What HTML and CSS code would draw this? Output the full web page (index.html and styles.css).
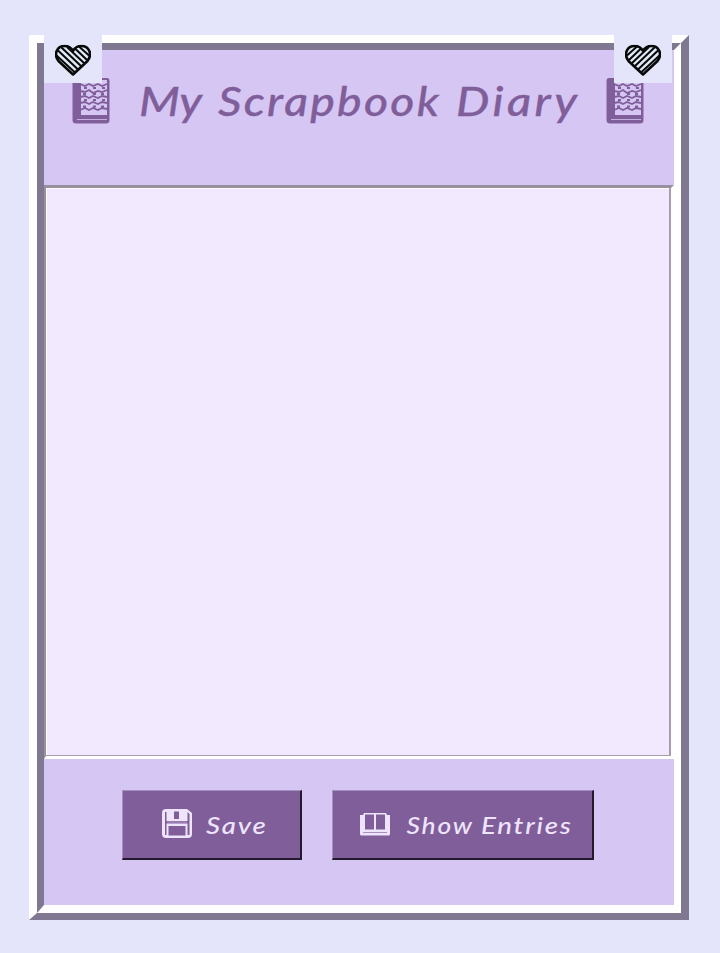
FILE: index.html
```html
<!DOCTYPE html>
<html lang="en">
<head>
<meta charset="utf-8">
<title>My Scrapbook Diary</title>
<link rel="stylesheet" href="styles.css">
</head>
<body>
<svg width="0" height="0" class="defs" aria-hidden="true">
  <symbol id="notebook" viewBox="0 0 38 46">
    <path fill="#805e9a" d="M3 0H35Q37.500 0 37.500 3V42Q37.500 45.500 34 45.500H4Q.5 45.500 .5 42V3Q.5 0 3 0Z"/>
    <path fill="#d6c6f4" d="M9 2H35V37H9Z"/>
    <path fill="none" stroke="#805e9a" stroke-width="1.800" d="M8 6l5 2 4-2 4 2 5-2 4 2 5-2M8 13l5 1 4-2 4 3 5-2 4 1 5-2M8 19l5-1 4 2 4-2 5 2 4-2 5 1M8 25l5-1 4 2 4-2 5 2 4-2 5 1M8 32l5-2 4 2 4-2 5 2 4-2 5 1M12 10h3m6 0h3m6 0h3M11 16h3m7 0h3m5 0h3M12 22h3m6 0h3m6 0h3M11 28.500h3m7 0h3m5 0h3"/>
    <path stroke="#c4aede" d="M5 41.500H35"/>
  </symbol>
  <symbol id="heart" viewBox="0 0 36 32">
    <path fill="#dfe9f5" d="M18 30L3.500 18C-2 10 2.500 1.500 9.500 1.500Q15.500 1.500 18 6.500Q20.500 1.500 26.500 1.500C33.500 1.500 38 10 32.500 18Z"/>
    <path fill="none" stroke="#080808" stroke-width="2" d="M1.500 11L20 28M3 6L23 25M6.500 3L26 21.500M12 2.500L29 18.500M20 4L32 15.500M24 2L34 11"/>
    <path fill="none" stroke="#080808" stroke-width="2.600" stroke-linejoin="round" d="M18 30L3.500 16.500C-2 9 2.500 1.500 9.500 1.500Q15.500 1.500 18 6.500Q20.500 1.500 26.500 1.500C33.500 1.500 38 9 32.500 16.500Z"/>
  </symbol>
</svg>
<main class="frame">
  <div class="diary">
    <svg class="corner left" viewBox="0 0 58 48"><use href="#heart" x="11" y="9.500" width="36" height="32"/></svg>
    <svg class="corner right" viewBox="0 0 58 48"><use href="#heart" x="11" y="9.500" width="36" height="32" transform="translate(58 0) scale(-1 1)"/></svg>
    <header class="head">
      <svg class="book"><use href="#notebook"/></svg>
      <h1 class="title"><span class="my">My</span> <span class="scrapbook">Scrapbook</span> <span class="day">Diary</span></h1>
      <svg class="book"><use href="#notebook"/></svg>
    </header>
    <div class="page" role="textbox" aria-label="Diary entry"></div>
    <footer class="actions">
      <button class="btn save">
        <svg class="disk" viewBox="0 0 30 29"><path fill="#eee4fc" fill-rule="evenodd" d="M4 0H25L30 4V25Q30 29 26 29H4Q0 29 0 25V4Q0 0 4 0ZM3 3V26H4.500V14.500H25.500V26H27.500V5L25.500 3V12H4.500V3ZM6.500 17V26.500H23.500V17ZM12 2.500V10H17V2.500Z"/><path stroke="#b19bc8" d="M5 13H25"/></svg>
        <span class="save-word">Save</span>
      </button>
      <button class="btn show">
        <svg class="open" viewBox="0 0 30 23"><path fill="#eee4fc" fill-rule="evenodd" d="M4 0H26L27 2H30V21.500L29 22.500H1L0 21.500V2H3ZM5 1.500V16.500H14V1.500ZM16 1.500V16.500H25V1.500Z"/><path stroke="#a78fc0" fill="none" d="M3 19.500H27"/></svg>
        <span class="show-word">Show</span> <span class="entries-word">Entries</span>
      </button>
    </footer>
  </div>
</main>
</body>
</html>
```

FILE: styles.css
```css
* { box-sizing: border-box; }
body {
  margin: 0;
  padding: 35px 31px 33px 29px;
  background: #e4e5fa;
  font-family: "Segoe Print", Lato, sans-serif;
  font-style: italic;
}
.defs { position: absolute; }
.frame {
  width: 660px;
  height: 885px;
  border: solid;
  border-width: 8px 8px 7px 8px;
  border-color: #fff #807891 #807891 #fff;
}
.diary {
  position: relative;
  display: flex;
  flex-direction: column;
  height: 100%;
  border: solid;
  border-width: 7px 7px 8px 7px;
  border-color: #807891 #fff #fff #807891;
  background: #d6c6f4;
}
.corner {
  position: absolute;
  top: -15px;
  width: 58px;
  height: 48px;
  background: #e4e5fa;
}
.left { left: 0; }
.right { right: 2px; }
.head {
  display: flex;
  align-items: flex-start;
  justify-content: space-between;
  height: 135px;
  padding: 28px 30px 0 28px;
}
.book { width: 38px; height: 46px; }
.title {
  display: flex;
  gap: 16px;
  width: 438px;
  margin: -2px 0 0;
  color: #805e9a;
  font-size: 41px;
  line-height: 50px;
  font-weight: 500;
  white-space: nowrap;
  -webkit-text-stroke: .3px #805e9a;
}
.title span { transform-origin: left; }
.my { width: 63px; transform: scaleX(1.15); }
.scrapbook { width: 222px; letter-spacing: 2px; transform: scaleX(1.13); }
.day { letter-spacing: 3px; transform: scaleX(1.15); }
.page {
  height: 574px;
  border: solid;
  border-width: 3px 3px 3px 2px;
  border-color: #99909f #fff #fff #99909f;
  background: #f2e9fe;
  box-shadow: inset -2px -1px #a79dad, inset 1px 1px #fff;
}
.actions {
  display: flex;
  gap: 30px;
  padding: 31px 78px 0;
}
.btn {
  display: flex;
  align-items: center;
  height: 70px;
  border: solid;
  border-width: 1px 2px 2px 1px;
  border-color: #a48fc1 #231a2b #231a2b #a48fc1;
  padding: 0;
  background: #805e9a;
  color: #eee4fc;
  font: inherit;
  font-size: 23px;
  font-weight: 500;
  letter-spacing: 1.5px;
  white-space: nowrap;
}
.btn span { transform-origin: left; }
.save { width: 180px; padding-left: 39px; gap: 14px; }
.show { width: 262px; padding-left: 27px; gap: 12px; }
.disk { width: 30px; height: 29px; margin-top: -3px; }
.open { width: 30px; height: 23px; }
.save-word { transform: scaleX(1.2); }
.show-word { width: 68px; margin-left: -1px; transform: scaleX(1.15); }
.entries-word { transform: scaleX(1.2); }
```
